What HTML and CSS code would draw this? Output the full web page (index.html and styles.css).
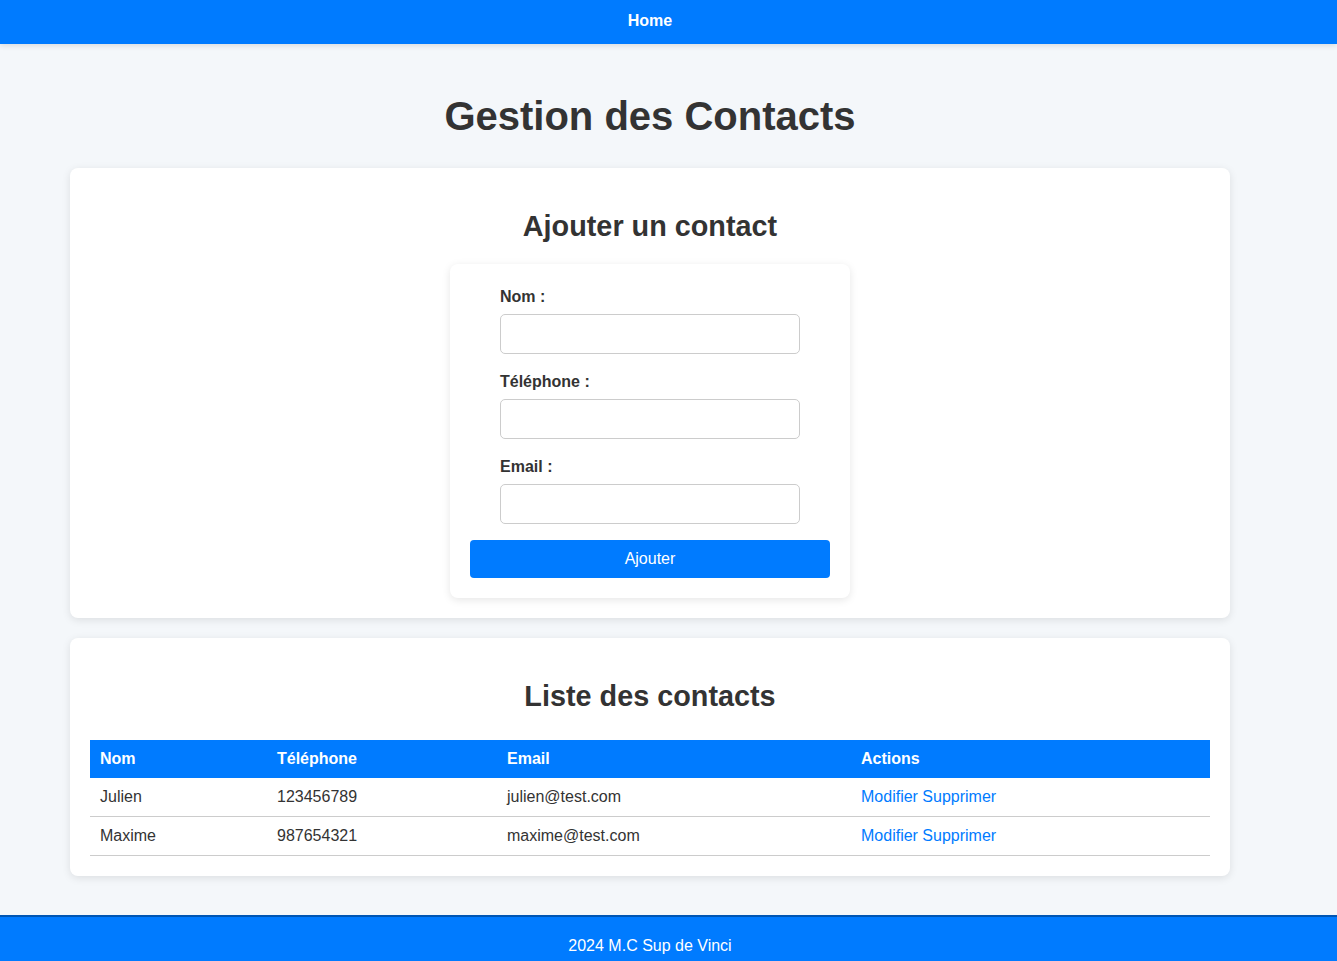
FILE: index.html
```html
<!DOCTYPE html>
<html lang="fr">
<head>
<meta charset="utf-8">
<title>Gestion des Contacts</title>
<link rel="stylesheet" href="styles.css">
</head>
<body>
<nav class="navbar"><a class="nav-link" href="#">Home</a></nav>
<main class="shell">
  <h1 class="page-title">Gestion des Contacts</h1>
  <section class="card">
    <h2 class="card-title">Ajouter un contact</h2>
    <form class="contact-form">
      <div class="field">
        <label class="field-label">Nom :</label>
        <input class="field-input" type="text">
      </div>
      <div class="field">
        <label class="field-label">Téléphone :</label>
        <input class="field-input" type="text">
      </div>
      <div class="field">
        <label class="field-label">Email :</label>
        <input class="field-input" type="text">
      </div>
      <button class="btn-submit" type="button">Ajouter</button>
    </form>
  </section>
  <section class="card">
    <h2 class="card-title list-title">Liste des contacts</h2>
    <table class="contacts">
      <thead>
        <tr>
          <th class="col-nom">Nom</th>
          <th class="col-tel">Téléphone</th>
          <th class="col-mail">Email</th>
          <th class="col-act">Actions</th>
        </tr>
      </thead>
      <tbody>
        <tr>
          <td>Julien</td>
          <td>123456789</td>
          <td>julien@test.com</td>
          <td><a class="act" href="#">Modifier</a> <a class="act" href="#">Supprimer</a></td>
        </tr>
        <tr>
          <td>Maxime</td>
          <td>987654321</td>
          <td>maxime@test.com</td>
          <td><a class="act" href="#">Modifier</a> <a class="act" href="#">Supprimer</a></td>
        </tr>
      </tbody>
    </table>
  </section>
</main>
<footer class="footer">2024 M.C Sup de Vinci</footer>
</body>
</html>
```
FILE: styles.css
```css
* { box-sizing: border-box; }
html, body { margin: 0; padding: 0; }
body {
  font-family: "Liberation Sans", Arial, sans-serif;
  font-size: 16px;
  color: #333;
  background: #f4f7fa;
}
.navbar {
  height: 44px;
  background: #007bff;
  text-align: center;
  padding-right: 37px;
  box-shadow: 0 2px 5px rgba(0,0,0,0.1);
  position: relative;
  z-index: 1;
}
.nav-link {
  display: inline-block;
  line-height: 42px;
  color: #fff;
  font-weight: bold;
  text-decoration: none;
}
.shell {
  width: 1300px;
  padding: 49px 0 39px;
}
.page-title {
  margin: 0 0 29px;
  font-size: 40px;
  line-height: 46px;
  text-align: center;
  color: #333;
}
.card {
  width: 1160px;
  margin: 0 auto 20px;
  background: #fff;
  border-radius: 8px;
  padding: 20px;
  box-shadow: 0 2px 8px rgba(0,0,0,0.1);
}
.card:last-child { margin-bottom: 0; }
.card-title {
  margin: 21px 0 21px;
  font-size: 28.8px;
  line-height: 34px;
  text-align: center;
  color: #333;
}
.list-title { margin-bottom: 27px; }
.contact-form {
  width: 400px;
  margin: 0 auto;
  padding: 21px 20px 20px;
  background: #fff;
  border-radius: 8px;
  box-shadow: 0 2px 8px rgba(0,0,0,0.1);
}
.field {
  width: 300px;
  margin: 0 auto 16px;
}
.field-label {
  display: block;
  font-weight: bold;
  line-height: 24px;
  margin-bottom: 5px;
}
.field-input {
  display: block;
  width: 300px;
  height: 40px;
  border: 1px solid #ccc;
  border-radius: 5px;
  padding: 8px;
  font: inherit;
}
.btn-submit {
  display: block;
  width: 100%;
  height: 38px;
  border: none;
  border-radius: 4px;
  background: #007bff;
  color: #fff;
  font-family: "Liberation Sans", Arial, sans-serif;
  font-size: 16px;
}
.contacts {
  width: 100%;
  border-collapse: collapse;
}
.contacts th, .contacts td {
  text-align: left;
  padding: 10px;
  line-height: 18px;
}
.contacts th {
  background: #007bff;
  color: #fff;
  font-weight: bold;
}
.contacts td {
  border-bottom: 1px solid #ccc;
  color: #333;
}
.col-nom { width: 177px; }
.col-tel { width: 230px; }
.col-mail { width: 354px; }
.act {
  color: #007bff;
  text-decoration: none;
}
.footer {
  background: #007bff;
  border-top: 2px solid #0056b3;
  color: #fff;
  text-align: center;
  padding: 20px 37px 20px 0;
  line-height: 18px;
}
```
